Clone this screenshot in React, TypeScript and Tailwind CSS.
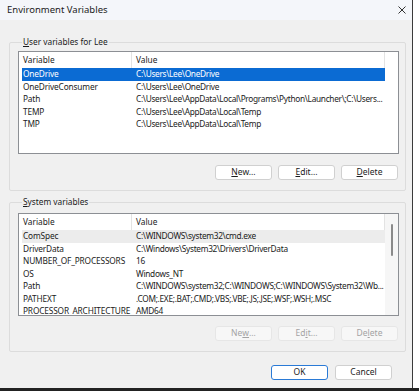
import React from 'react'

type Row = { name: string; value: string }

const userVars: Row[] = [
  { name: 'OneDrive', value: 'C:\\Users\\Lee\\OneDrive' },
  { name: 'OneDriveConsumer', value: 'C:\\Users\\Lee\\OneDrive' },
  { name: 'Path', value: 'C:\\Users\\Lee\\AppData\\Local\\Programs\\Python\\Launcher\\;C:\\Users...' },
  { name: 'TEMP', value: 'C:\\Users\\Lee\\AppData\\Local\\Temp' },
  { name: 'TMP', value: 'C:\\Users\\Lee\\AppData\\Local\\Temp' },
]

const systemVars: Row[] = [
  { name: 'ComSpec', value: 'C:\\WINDOWS\\system32\\cmd.exe' },
  { name: 'DriverData', value: 'C:\\Windows\\System32\\Drivers\\DriverData' },
  { name: 'NUMBER_OF_PROCESSORS', value: '16' },
  { name: 'OS', value: 'Windows_NT' },
  { name: 'Path', value: 'C:\\WINDOWS\\system32;C:\\WINDOWS;C:\\WINDOWS\\System32\\Wb...' },
  { name: 'PATHEXT', value: '.COM;.EXE;.BAT;.CMD;.VBS;.VBE;.JS;.JSE;.WSF;.WSH;.MSC' },
  { name: 'PROCESSOR_ARCHITECTURE', value: 'AMD64' },
]

function Btn({ pre, key1, post, disabled, primary }: { pre: string; key1: string; post: string; disabled?: boolean; primary?: boolean }) {
  return (
    <button
      className={
        'h-[15px] w-[57px] rounded-[3px] border text-[8.5px] leading-none flex items-center justify-center ' +
        (disabled
          ? 'border-[#e6e6e6] bg-[#f7f7f7] text-[#a3a3a3]'
          : primary
            ? 'border-[#2a7ad6] bg-white text-[#1b1b1b]'
            : 'border-[#d0d0d0] bg-white text-[#1b1b1b]')
      }
    >
      {pre}
      <span className="underline underline-offset-1">{key1}</span>
      {post}
    </button>
  )
}

function VarList({ rows, selected, focused, scroll }: { rows: Row[]; selected: number; focused: boolean; scroll?: boolean }) {
  return (
    <div className="h-[103px] border border-[#8c8f94] bg-white flex overflow-hidden">
      <div className="w-[366px] flex flex-col">
        <div className="h-[16px] flex shrink-0 text-[#1b1b1b]">
          <div className="w-[113px] pl-[4px] flex items-center border-r border-[#e3e3e3]">Variable</div>
          <div className="flex-1 pl-[4px] flex items-center border-r border-[#e3e3e3]">Value</div>
        </div>
        {rows.map((r, i) => {
          const sel = i === selected
          return (
            <div
              key={r.name + i}
              className={
                'h-[12.5px] flex shrink-0 items-center ml-[3px] ' +
                (sel ? (focused ? 'bg-[#0b6bd3] text-white' : 'bg-[#ececec] text-[#1b1b1b]') : 'text-[#1b1b1b]')
              }
            >
              <div className="w-[110px] pl-[1px] whitespace-nowrap tracking-[-0.15px]">{r.name}</div>
              <div className="flex-1 pl-[4px] whitespace-nowrap overflow-hidden tracking-[-0.3px]">{r.value}</div>
            </div>
          )
        })}
      </div>
      <div className={'flex-1 flex justify-center pt-[10px] ' + (scroll ? 'bg-[#f6f6f6]' : 'bg-white')}>
        {scroll && <div className="w-[2px] h-[32px] rounded-full bg-[#8a8a8a]" />}
      </div>
    </div>
  )
}

function Group({ k, rest, children }: { k: string; rest: string; children: React.ReactNode }) {
  return (
    <fieldset className="border border-[#dcdcdc] rounded-[2px] pl-[8px] pr-[6px] pb-[10px] w-[397px]">
      <legend className="ml-[4px] px-[1px] text-[#1b1b1b] leading-[12px]">
        <span className="underline underline-offset-1">{k}</span>
        {rest}
      </legend>
      {children}
    </fieldset>
  )
}

export default function App() {
  return (
    <div
      className="w-[419px] h-[391px] bg-white flex flex-col text-[8.3px]"
      style={{ fontFamily: '"Noto Sans", "Open Sans", sans-serif' }}
    >
      <div className="flex h-[388px]">
        <div className="w-[413px] bg-[#f0f0f0] border-r border-[#3a3a3a] flex flex-col">
          {/* title bar */}
          <div className="h-[20px] bg-[#f4f6fa] flex items-center justify-between pl-[7px] pr-[5px] text-[#1b1b1b]">
            <span className="text-[9.5px]">Environment Variables</span>
            <svg width="10" height="10" viewBox="0 0 10 10" className="mb-[1px]">
              <path d="M1.5 1.5 L8.5 8.5 M8.5 1.5 L1.5 8.5" stroke="#333" strokeWidth="1" />
            </svg>
          </div>

          <div className="pl-[9px] pt-[16px] flex flex-col">
            <Group k="U" rest="ser variables for Lee">
              <div className="pt-[3px]">
                <VarList rows={userVars} selected={0} focused />
              </div>
              <div className="flex justify-end gap-[6px] mt-[11px] mr-[1px]">
                <Btn pre="" key1="N" post="ew..." />
                <Btn pre="" key1="E" post="dit..." />
                <Btn pre="" key1="D" post="elete" />
              </div>
            </Group>

            <div className="h-[5px]" />

            <Group k="S" rest="ystem variables">
              <div className="pt-[5px]">
                <VarList rows={systemVars} selected={0} focused={false} scroll />
              </div>
              <div className="flex justify-end gap-[6px] mt-[10px] mr-[1px]">
                <Btn pre="Ne" key1="w" post="..." disabled />
                <Btn pre="Ed" key1="i" post="t..." disabled />
                <Btn pre="De" key1="l" post="ete" disabled />
              </div>
            </Group>

            <div className="flex justify-end gap-[7px] mt-[13px] mr-[20px]">
              <Btn pre="" key1="" post="OK" primary />
              <Btn pre="" key1="" post="Cancel" />
            </div>
          </div>
        </div>
      </div>
      <div className="h-[3px] bg-[#222]" />
    </div>
  )
}
